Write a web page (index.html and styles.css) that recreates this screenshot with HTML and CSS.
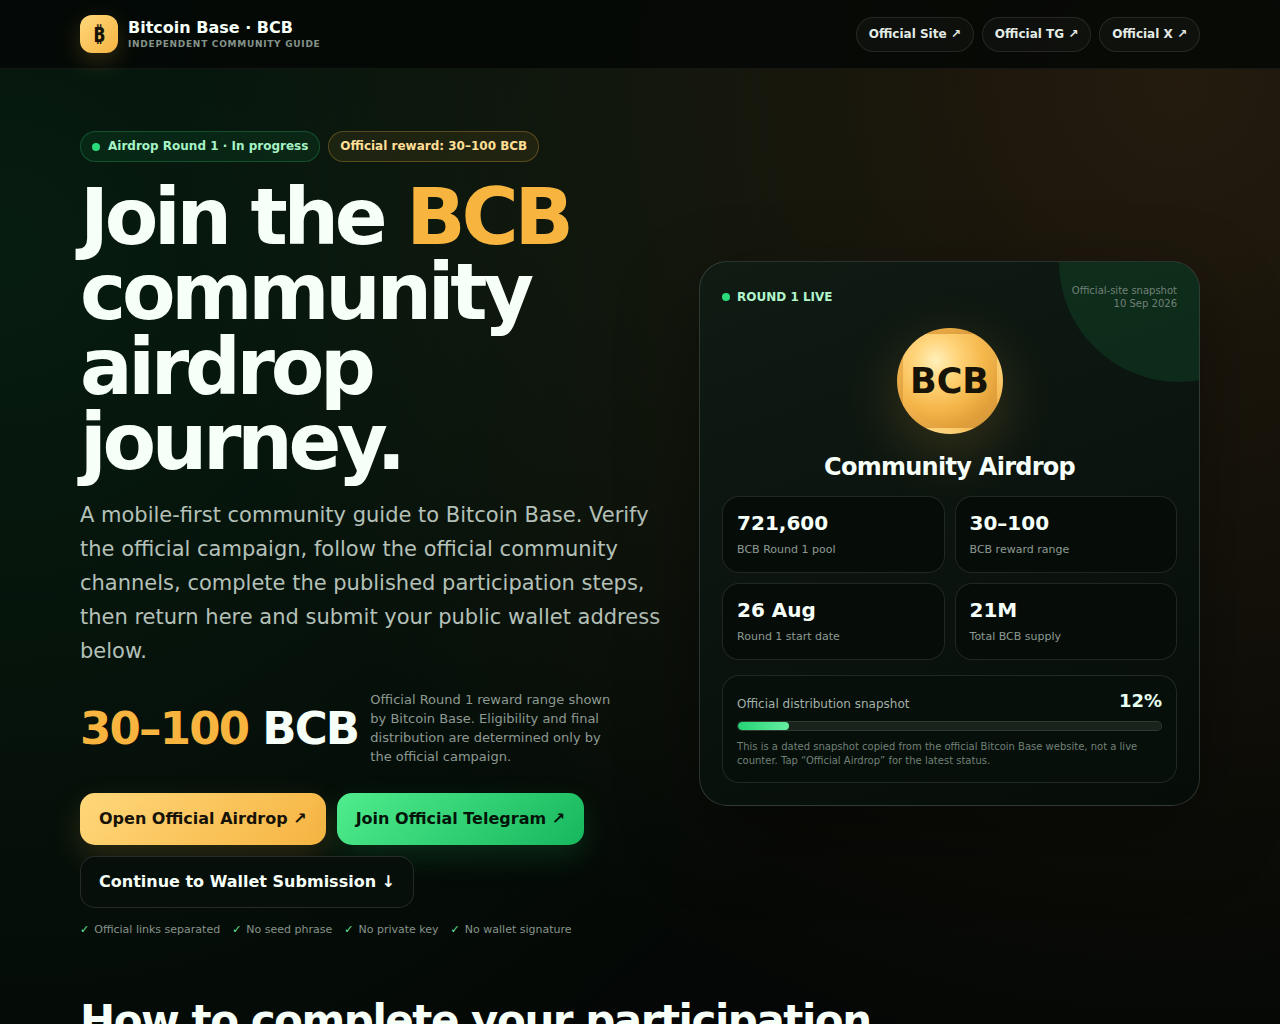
FILE: index.html
```html
<!DOCTYPE html>
<html lang="en">
<head>
<meta charset="utf-8">
<meta name="viewport" content="width=device-width, initial-scale=1">
<title>Bitcoin Base · BCB</title>
<link rel="stylesheet" href="styles.css">
</head>
<body>
<header class="topbar">
  <div class="wrap topbar-inner">
    <a class="brand" href="#top">
      <span class="brand-mark">₿</span>
      <span class="brand-text">
        <strong>Bitcoin Base · BCB</strong>
        <small>Independent community guide</small>
      </span>
    </a>
    <nav class="top-links" aria-label="Official links">
      <a href="#site">Official Site ↗</a>
      <a href="#tg">Official TG ↗</a>
      <a href="#x">Official X ↗</a>
    </nav>
  </div>
</header>
<main id="top">
  <section class="wrap hero">
    <div class="intro">
      <div class="pills">
        <span class="pill pill-green"><i class="dot"></i>Airdrop Round 1 · In progress</span>
        <span class="pill pill-gold">Official reward: 30–100 BCB</span>
      </div>
      <h1>Join the <span class="gold">BCB</span> community airdrop journey.</h1>
      <p class="lead">A mobile-first community guide to Bitcoin Base. Verify the official campaign, follow the official community channels, complete the published participation steps, then return here and submit your public wallet address below.</p>
      <div class="reward">
        <div class="reward-value"><span class="gold">30–100</span> BCB</div>
        <p>Official Round 1 reward range shown by Bitcoin Base. Eligibility and final distribution are determined only by the official campaign.</p>
      </div>
      <div class="actions">
        <a class="btn btn-gold" href="#airdrop">Open Official Airdrop ↗</a>
        <a class="btn btn-green" href="#telegram">Join Official Telegram ↗</a>
        <a class="btn btn-dark" href="#steps">Continue to Wallet Submission ↓</a>
      </div>
      <ul class="checks">
        <li>Official links separated</li>
        <li>No seed phrase</li>
        <li>No private key</li>
        <li>No wallet signature</li>
      </ul>
    </div>
    <aside class="card">
      <div class="card-top">
        <span class="live"><i class="dot"></i>ROUND 1 LIVE</span>
        <span class="stamp">Official-site snapshot<br>10 Sep 2026</span>
      </div>
      <div class="coin">BCB</div>
      <h2>Community Airdrop</h2>
      <div class="stats">
        <div class="stat"><strong>721,600</strong><span>BCB Round 1 pool</span></div>
        <div class="stat"><strong>30–100</strong><span>BCB reward range</span></div>
        <div class="stat"><strong>26 Aug</strong><span>Round 1 start date</span></div>
        <div class="stat"><strong>21M</strong><span>Total BCB supply</span></div>
      </div>
      <div class="progress">
        <div class="progress-head"><span>Official distribution snapshot</span><strong>12%</strong></div>
        <div class="bar"><div class="bar-fill" style="width:12%"></div></div>
        <p>This is a dated snapshot copied from the official Bitcoin Base website, not a live counter. Tap “Official Airdrop” for the latest status.</p>
      </div>
    </aside>
  </section>
  <section class="wrap steps" id="steps">
    <h2>How to complete your participation</h2>
  </section>
</main>
</body>
</html>
```
FILE: styles.css
```css
* { box-sizing: border-box; }

body {
  margin: 0;
  min-height: 100vh;
  color: #f7fff9;
  font-family: "DejaVu Sans", sans-serif;
  background:
    radial-gradient(circle at 0% 24%, rgba(24, 150, 80, 0.15), transparent 66%),
    radial-gradient(circle at 92% 8%, rgba(226, 150, 70, 0.14), transparent 66%),
    #040705;
}

a { color: inherit; text-decoration: none; }
h1, h2, p { margin: 0; }

.wrap { width: calc(100% - 32px); max-width: 1120px; margin: 0 auto; }
.gold { color: #f7b540; }

.topbar {
  background: rgba(4, 7, 5, 0.84);
  border-bottom: 1px solid rgba(255, 255, 255, 0.06);
}
.topbar-inner {
  display: flex;
  align-items: center;
  justify-content: space-between;
  min-height: 68px;
}
.brand { display: flex; align-items: center; gap: 10px; }
.brand-mark {
  display: grid;
  place-items: center;
  width: 38px;
  height: 38px;
  border-radius: 12px;
  background: linear-gradient(135deg, #ffd77a, #f6b441);
  color: #171307;
  font-family: "Noto Sans", sans-serif;
  font-size: 21px;
  font-weight: 700;
  line-height: 24px;
  box-shadow: 0 8px 24px rgba(246, 180, 65, 0.2);
}
.brand-text strong { display: block; font-size: 16px; line-height: 20px; }
.brand-text small {
  display: block;
  color: #85938a;
  font-size: 9px;
  font-weight: 700;
  line-height: 12px;
  letter-spacing: 0.08em;
  text-transform: uppercase;
}
.top-links { display: flex; gap: 8px; }
.top-links a {
  padding: 9px 12px;
  border: 1px solid rgba(255, 255, 255, 0.1);
  border-radius: 18px;
  background: rgba(255, 255, 255, 0.03);
  color: #e3ebe5;
  font-size: 12px;
  font-weight: 700;
  line-height: 15px;
}

.hero {
  display: grid;
  grid-template-columns: 1.16fr 1fr;
  gap: 38px;
  align-items: center;
  padding: 62px 0;
}

.pills { display: flex; flex-wrap: wrap; gap: 8px; }
.pill {
  display: flex;
  align-items: center;
  gap: 8px;
  padding: 8px 11px;
  border: 1px solid;
  border-radius: 16px;
  font-size: 12px;
  font-weight: 700;
  line-height: 13px;
}
.pill-green { color: #a5f3c4; background: rgba(34, 224, 120, 0.07); border-color: rgba(52, 211, 125, 0.25); }
.pill-gold { color: #ffdf96; background: rgba(246, 180, 65, 0.08); border-color: rgba(246, 180, 65, 0.28); }
.dot { width: 8px; height: 8px; border-radius: 50%; background: #2bdb7b; }

h1 {
  margin-top: 18px;
  font-size: 78px;
  font-weight: 700;
  line-height: 75px;
  letter-spacing: -0.055em;
}
.lead { margin-top: 18px; color: #b4c0b8; font-size: 21px; line-height: 34px; }

.reward { display: flex; align-items: center; gap: 12px; margin-top: 22px; }
.reward-value {
  flex: none;
  font-size: 45px;
  font-weight: 700;
  line-height: 45px;
  letter-spacing: -0.04em;
}
.reward p { max-width: 250px; color: #8d9a92; font-size: 13px; line-height: 19px; }

.actions { display: flex; flex-wrap: wrap; gap: 11px; margin-top: 27px; }
.btn {
  padding: 16px 18px;
  border: 1px solid transparent;
  border-radius: 15px;
  font-size: 16px;
  font-weight: 700;
  line-height: 18px;
}
.btn-gold { color: #171307; background: linear-gradient(135deg, #ffd77a, #f6b441) border-box; box-shadow: 0 12px 30px rgba(246, 180, 65, 0.17); }
.btn-green { color: #031409; background: linear-gradient(135deg, #50ec8d, #17b75e) border-box; box-shadow: 0 12px 30px rgba(34, 197, 94, 0.17); }
.btn-dark { background: #070f0b; border-color: rgba(255, 255, 255, 0.12); }

.checks {
  display: flex;
  flex-wrap: wrap;
  gap: 12px;
  margin: 16px 0 0;
  padding: 0;
  list-style: none;
  color: #85938a;
  font-size: 11px;
  line-height: 12px;
}
.checks li::before { content: "✓"; margin-right: 5px; color: #65e69b; }

.card {
  position: relative;
  overflow: hidden;
  padding: 22px;
  border: 1px solid rgba(255, 255, 255, 0.15);
  border-radius: 28px;
  background: linear-gradient(160deg, #101b14, #0b140f 50%, #060d09);
  box-shadow: 0 28px 80px rgba(0, 0, 0, 0.35);
}
.card::before {
  content: "";
  position: absolute;
  top: -120px;
  right: -100px;
  width: 240px;
  height: 240px;
  border-radius: 50%;
  background: rgba(24, 196, 100, 0.12);
}
.card-top { position: relative; display: flex; align-items: center; justify-content: space-between; }
.live { display: flex; align-items: center; gap: 7px; color: #b2f5cb; font-size: 12px; font-weight: 700; }
.stamp { color: #718078; font-size: 10px; line-height: 13px; text-align: right; }
.coin {
  display: grid;
  place-items: center;
  width: 106px;
  height: 106px;
  margin: 18px auto 0;
  border: 6px solid rgba(255, 255, 255, 0.04);
  border-radius: 50%;
  background: radial-gradient(circle at 35% 28%, #fff0bb, #ffd47a 24%, #f4b548 55%, #c98528);
  box-shadow: 0 18px 60px rgba(246, 180, 65, 0.2);
  color: #171307;
  font-size: 35px;
  font-weight: 700;
}
.card h2 { margin-top: 18px; font-size: 24px; line-height: 30px; letter-spacing: -0.03em; text-align: center; }
.stats { display: grid; grid-template-columns: 1fr 1fr; gap: 10px; margin-top: 14px; }
.stat { padding: 14px; border: 1px solid rgba(255, 255, 255, 0.11); border-radius: 17px; background: #060d09; }
.stat strong { display: block; font-size: 20px; line-height: 24px; }
.stat span { display: block; margin-top: 7px; color: #8d9a92; font-size: 11px; line-height: 16px; }
.progress {
  margin-top: 15px;
  padding: 14px;
  border: 1px solid rgba(255, 255, 255, 0.11);
  border-radius: 17px;
  background: #060f09;
}
.progress-head { display: flex; justify-content: space-between; align-items: flex-end; color: #a3b0a8; font-size: 12px; line-height: 16px; }
.progress-head strong { color: #e9fff0; font-size: 18px; line-height: 22px; }
.bar {
  height: 10px;
  margin-top: 9px;
  overflow: hidden;
  border: 1px solid rgba(255, 255, 255, 0.1);
  border-radius: 5px;
  background: #17231b;
}
.bar-fill { height: 100%; border-radius: 5px; background: linear-gradient(90deg, #25d375, #66eda0); }
.progress p { margin-top: 9px; color: #718078; font-size: 10px; line-height: 14px; }

.steps h2 { font-size: 42px; line-height: 46px; letter-spacing: -0.035em; }
```
